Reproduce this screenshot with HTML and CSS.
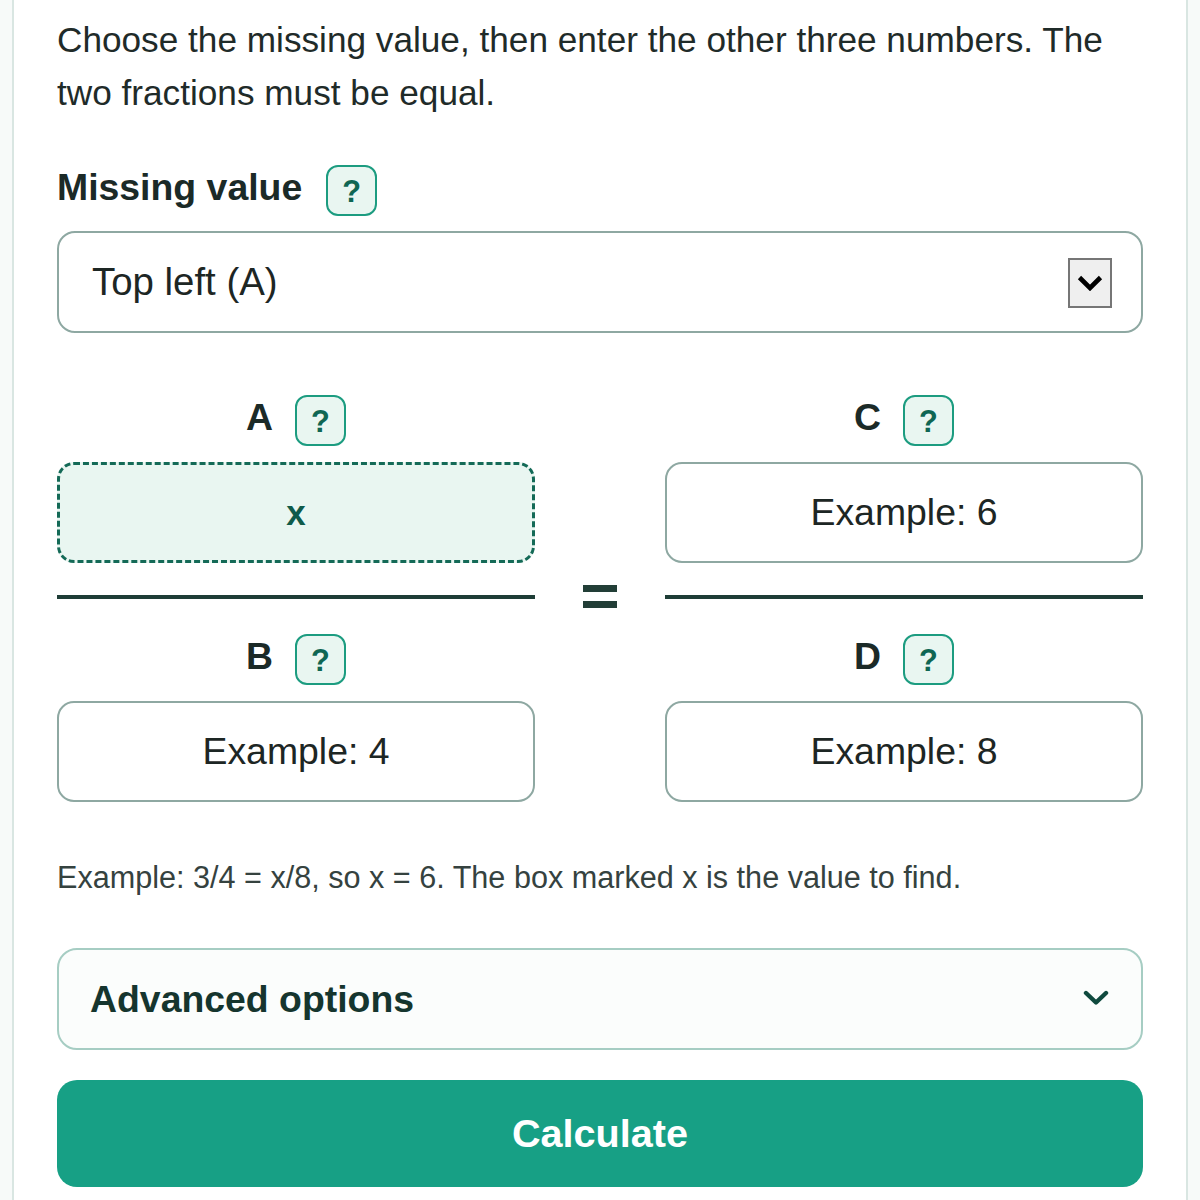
FILE: index.html
```html
<!DOCTYPE html>
<html lang="en">
<head>
<meta charset="utf-8">
<title>Missing value in equal fractions</title>
<link rel="stylesheet" href="styles.css">
</head>
<body>
<div class="page">
  <main class="card">
    <p class="intro">Choose the missing value, then enter the other three numbers. The two fractions must be equal.</p>

    <div class="field-label">
      <span class="label-text">Missing value</span>
      <button class="help" type="button">?</button>
    </div>
    <div class="select" role="combobox" aria-expanded="false">
      <span class="select-value">Top left (A)</span>
      <span class="select-arrow">
        <svg width="26" height="16" viewBox="0 0 26 16" aria-hidden="true"><path d="M2.5 2.5 L13 13 L23.5 2.5" fill="none" stroke="#000" stroke-width="4.6"/></svg>
      </span>
    </div>

    <div class="fraction">
      <div class="term term-a">
        <div class="term-label"><span class="letter">A</span><button class="help" type="button">?</button></div>
        <div class="box box-missing">x</div>
      </div>
      <div class="term term-c">
        <div class="term-label"><span class="letter">C</span><button class="help" type="button">?</button></div>
        <div class="box">Example: 6</div>
      </div>

      <div class="bar bar-left"></div>
      <div class="equals"><span></span><span></span></div>
      <div class="bar bar-right"></div>

      <div class="term term-b">
        <div class="term-label"><span class="letter">B</span><button class="help" type="button">?</button></div>
        <div class="box">Example: 4</div>
      </div>
      <div class="term term-d">
        <div class="term-label"><span class="letter">D</span><button class="help" type="button">?</button></div>
        <div class="box">Example: 8</div>
      </div>
    </div>

    <p class="note">Example: 3/4 = x/8, so x = 6. The box marked x is the value to find.</p>

    <div class="advanced">
      <span class="advanced-title">Advanced options</span>
      <svg class="chevron" width="26" height="16" viewBox="0 0 26 16" aria-hidden="true"><path d="M3 3 L13 12.5 L23 3" fill="none" stroke="#0f4a3e" stroke-width="4.4" stroke-linecap="round" stroke-linejoin="round"/></svg>
    </div>

    <button class="calc" type="button">Calculate</button>
  </main>
</div>
</body>
</html>
```
FILE: styles.css
```css
* { box-sizing: border-box; }

html, body {
  margin: 0;
  padding: 0;
  background: #f7faf9;
  font-family: "Liberation Sans", Arial, sans-serif;
  color: #1d2a27;
}

.page {
  padding: 0 12px;
}

.card {
  background: #ffffff;
  border-left: 2px solid #d9e6e2;
  border-right: 2px solid #d9e6e2;
  padding: 14px 43px 40px;
  min-height: 1200px;
}

.intro {
  margin: 0;
  font-size: 35.2px;
  line-height: 52.5px;
  color: #1f2b29;
}

.field-label {
  margin-top: 46px;
  display: flex;
  align-items: center;
  gap: 24px;
  height: 51px;
}

.label-text {
  font-size: 37.4px;
  font-weight: 700;
  color: #1b2a27;
  margin-top: -6px;
}

.help {
  width: 51px;
  height: 51px;
  padding: 0;
  border: 2.2px solid #1c9c80;
  border-radius: 12px;
  background: #e9f6f1;
  color: #0f6653;
  font-family: "Liberation Sans", Arial, sans-serif;
  font-size: 30.8px;
  font-weight: 700;
  line-height: 1;
  display: flex;
  align-items: center;
  justify-content: center;
  padding-top: 3px;
}

.select {
  margin-top: 15px;
  height: 102px;
  border: 2.2px solid #8ea8a2;
  border-radius: 18px;
  background: #ffffff;
  display: flex;
  align-items: center;
  padding: 0 29px 0 33px;
}

.select-value {
  font-size: 38.4px;
  color: #1d2624;
  flex: 1;
}

.select-arrow {
  width: 44px;
  height: 50px;
  background: #efefef;
  border: 2px solid #767676;
  display: flex;
  align-items: center;
  justify-content: center;
  margin-top: 2px;
}

.fraction {
  margin-top: 62px;
  display: grid;
  grid-template-columns: 1fr 34px 1fr;
  column-gap: 48px;
  align-items: start;
}

.term {
  display: flex;
  flex-direction: column;
  gap: 16px;
}

.term-a { grid-column: 1; grid-row: 1; }
.term-c { grid-column: 3; grid-row: 1; }
.term-b { grid-column: 1; grid-row: 3; }
.term-d { grid-column: 3; grid-row: 3; }

.term-label {
  display: flex;
  justify-content: center;
  align-items: center;
  gap: 22px;
  height: 51px;
}

.letter {
  font-size: 37.4px;
  font-weight: 700;
  color: #1b2a27;
  margin-top: -6px;
}

.box {
  height: 101px;
  border: 2.2px solid #8ea8a2;
  border-radius: 17px;
  background: #ffffff;
  display: flex;
  align-items: center;
  justify-content: center;
  font-size: 37.4px;
  color: #1d2624;
}

.box-missing {
  border: 3.3px dashed #146a57;
  background: #e9f6f1;
  color: #0f5b4a;
  font-weight: 700;
  font-size: 35px;
}

.bar {
  grid-row: 2;
  height: 4.4px;
  background: #1e3d36;
  margin-top: 31.5px;
}
.bar-left { grid-column: 1; }
.bar-right { grid-column: 3; }

.equals {
  grid-column: 2;
  grid-row: 2;
  display: flex;
  flex-direction: column;
  gap: 9px;
  margin: 22px 0 26px;
}

.equals span {
  display: block;
  height: 7px;
  background: #223e37;
}

.note {
  margin: 52px 0 0;
  font-size: 30.6px;
  line-height: 46px;
  color: #35423f;
}

.advanced {
  margin-top: 48px;
  height: 102px;
  border: 2.2px solid #a6cdc3;
  border-radius: 20px;
  background: #fbfdfc;
  display: flex;
  align-items: center;
  justify-content: space-between;
  padding: 0 32px 0 31px;
}

.advanced-title {
  font-size: 37.4px;
  font-weight: 700;
  color: #15352e;
}

.chevron {
  margin-top: -2px;
}

.calc {
  display: block;
  width: 100%;
  margin-top: 30px;
  height: 107px;
  border: none;
  border-radius: 20px;
  background: #17a085;
  color: #ffffff;
  font-family: "Liberation Sans", Arial, sans-serif;
  font-size: 39.6px;
  font-weight: 700;
}
```
